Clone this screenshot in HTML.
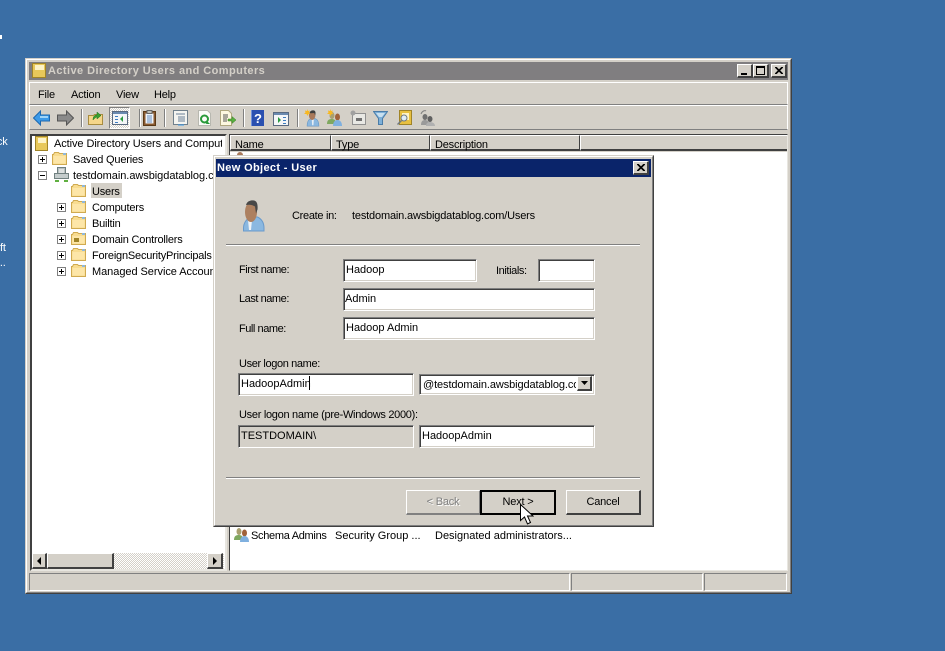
<!DOCTYPE html>
<html><head><meta charset="utf-8"><style>
html,body{margin:0;padding:0;width:945px;height:651px;overflow:hidden;background:#3a6ea5}
body{position:relative;font:11px/13px "Liberation Sans",sans-serif;color:#000;letter-spacing:-.2px}
div,svg{position:absolute}
.t{white-space:nowrap}
.sunk{background:#fff;border:1px solid;border-color:#808080 #fff #fff #808080;box-shadow:inset 1px 1px 0 #404040,inset -1px -1px 0 #d4d0c8;box-sizing:border-box}
.sunk .t{letter-spacing:0}
.face{background:#d4d0c8}
.ln{height:1px;background:#fff;border-top:1px solid #808080}
.btn{background:#d4d0c8;box-sizing:border-box;border-top:1px solid #fff;border-left:1px solid #fff;border-right:2px solid #404040;border-bottom:2px solid #404040;text-align:center}
.hd{background:#d4d0c8;box-sizing:border-box;border-top:1px solid #fff;border-left:1px solid #fff;border-right:1px solid #404040;border-bottom:2px solid #404040;height:16px;top:135px;padding:3px 0 0 4px}
.ex{width:9px;height:9px;box-sizing:border-box;border:1px solid #808080;background:#fff}
.ex:before{content:"";position:absolute;left:1px;top:3px;width:5px;height:1px;background:#000}
.ex.p:after{content:"";position:absolute;left:3px;top:1px;width:1px;height:5px;background:#000}
.sep{width:1px;background:#808080;border-right:1px solid #fff;top:109px;height:18px}
</style></head><body>
<svg width="0" height="0"><defs>
<symbol id="folder" viewBox="0 0 15 13"><path d="M.5 2.500h1l1-2h4l1 1h7v11H.500z" fill="#f8dc90" stroke="#d0aa50"/><path d="M1.500 4h12v7.500h-12z" fill="#fde6a8"/><path d="M11 1h3v2h-3z" fill="#8fb8dc"/></symbol>
<symbol id="user" viewBox="0 0 15 20"><path d="M.5 19c0-6 2-8 4.500-9h5c2.500 1 4.500 3 4.500 9z" fill="#8bb8e0" stroke="#5f8fbd" stroke-width=".6"/><path d="M6 11h2.500L8 18H6.500z" fill="#e8eef4"/><ellipse cx="6.500" cy="6.500" rx="3.800" ry="5.200" fill="#a9795a"/><path d="M3.500 4c0-3 3-4 5-3.500s2.500 3 1.500 6L9 3.500z" fill="#3e3e3e"/></symbol>
<symbol id="grp" viewBox="0 0 16 16"><ellipse cx="5" cy="4.500" rx="2.500" ry="3.500" fill="#a9a070"/><path d="M0 13c0-4 2-5 5-5s4 2 4 5z" fill="#7fa860"/><ellipse cx="10.500" cy="6" rx="2.500" ry="3.500" fill="#a0623a"/><path d="M6 15c0-4 2-6 4.500-6s4.500 2 4.500 6z" fill="#7fb0df"/></symbol>
</defs></svg>

<!-- desktop remnants -->
<div class="t" style="left:-9px;top:136px;color:#fff">ack</div>
<div class="t" style="left:-13px;top:242px;color:#fff">Soft</div>
<div class="t" style="left:-3px;top:257px;color:#fff">...</div>
<div style="left:0;top:35px;width:2px;height:4px;background:#fff"></div>

<!-- main window -->
<div style="left:25px;top:58px;width:767px;height:536px;box-sizing:border-box;background:#d4d0c8;border:1px solid #d4d0c8;border-right-color:#404040;border-bottom-color:#404040"></div>
<div style="left:26px;top:59px;width:765px;height:534px;box-sizing:border-box;border:1px solid #fff;border-right-color:#808080;border-bottom-color:#808080"></div>
<div style="left:29px;top:62px;width:759px;height:18px;background:#807e80"></div>
<svg style="left:32px;top:63px" width="15" height="16"><rect x=".5" y=".5" width="13" height="14" fill="#e8c85a" stroke="#a08428"/><rect x="3" y="2" width="9" height="5" fill="#fdf3c8"/></svg>
<div class="t" style="left:48px;top:65px;color:#d4d0c8;font-weight:bold;letter-spacing:.43px">Active Directory Users and Computers</div>
<div class="btn" style="left:737px;top:64px;width:16px;height:14px"><div style="left:3px;top:8px;width:6px;height:2px;background:#000"></div></div>
<div class="btn" style="left:753px;top:64px;width:16px;height:14px"><div style="left:2px;top:1px;width:9px;height:9px;box-sizing:border-box;border:1px solid #000;border-top-width:2px"></div></div>
<div class="btn" style="left:771px;top:64px;width:16px;height:14px"><svg style="left:3px;top:2px" width="8" height="7"><path d="M0 0l7 7M1 0l7 7M7 0L0 7M8 0L1 7" stroke="#000"/></svg></div>

<!-- menu -->
<div style="left:29px;top:82px;width:759px;height:23px;box-sizing:border-box;border-top:1px solid #fff;border-left:1px solid #fff;border-right:1px solid #fff;border-bottom:1px solid #808080"></div>
<div style="left:29px;top:105px;width:759px;height:25px;box-sizing:border-box;border-top:1px solid #fff;border-left:1px solid #fff;border-right:1px solid #fff;border-bottom:1px solid #808080"></div>
<div class="t" style="left:38px;top:89px">File</div>
<div class="t" style="left:71px;top:89px">Action</div>
<div class="t" style="left:116px;top:89px">View</div>
<div class="t" style="left:154px;top:89px">Help</div>

<!-- toolbar -->
<svg style="left:33px;top:110px" width="18" height="16"><path d="M.5 8l7-7v4h9v6h-9v4z" fill="#3c9ae8" stroke="#1c68b0"/><path d="M7 6h8v2H7z" fill="#9fd4f8"/></svg>
<svg style="left:56px;top:110px" width="18" height="16"><path d="M17.500 8l-7-7v4h-9v6h9v4z" fill="#8a8a8a" stroke="#555"/></svg>
<div class="sep" style="left:81px"></div>
<svg style="left:88px;top:110px" width="16" height="16"><path d="M.5 5.500h5l1-1h8v10H.500z" fill="#f5d68a" stroke="#a88c40"/><path d="M5 10c0-4 2-5 4-5V2l4 3.500-4 3.500V7C8 7 7 8 5 10z" fill="#3aa030" stroke="#1e7018" stroke-width=".5"/></svg>
<div style="left:109px;top:107px;width:21px;height:22px;box-sizing:border-box;border:1px solid #808080;border-right-color:#fff;border-bottom-color:#fff;background:repeating-conic-gradient(#fff 0 25%,#d4d0c8 0 50%) 0 0/2px 2px"></div>
<svg style="left:112px;top:111px" width="16" height="14"><rect x=".5" y=".5" width="15" height="13" fill="#f4f6f8" stroke="#5a6a80"/><rect x="1" y="1" width="14" height="2" fill="#6a8ab0"/><path d="M3 5h3v1H3zM3 8h3v1H3zM3 11h3v1H3z" fill="#3c7cc0"/><path d="M11 5v6L8 8z" fill="#2a9a40"/></svg>
<div class="sep" style="left:139px"></div>
<svg style="left:143px;top:110px" width="14" height="16"><rect x=".5" y="1.500" width="12" height="14" fill="#8a5a30" stroke="#5a3a18"/><rect x="2.500" y="3.500" width="8" height="10" fill="#eef4fa"/><path d="M4 6h5M4 8h5M4 10h5M4 12h5" stroke="#6a90c0"/><rect x="4" y=".5" width="5" height="3" fill="#c0c0b8" stroke="#666"/></svg>
<div class="sep" style="left:164px"></div>
<svg style="left:173px;top:110px" width="15" height="16"><rect x=".5" y=".5" width="14" height="14" fill="#f4f4f0" stroke="#70808c"/><path d="M3 4h9M5 7h7M5 9h7M5 11h7" stroke="#6a8098"/><path d="M5 15h6" stroke="#3c9ae8"/></svg>
<svg style="left:198px;top:110px" width="14" height="16"><path d="M.5.500h9l3 3v12H.500z" fill="#fbfbf8" stroke="#b8b8b0"/><circle cx="6.500" cy="9" r="3.500" fill="none" stroke="#2a9a3a" stroke-width="2"/><path d="M9 11l3 3H8z" fill="#2a9a3a"/></svg>
<svg style="left:220px;top:110px" width="16" height="16"><path d="M.5.500h8l3 3v12H.500z" fill="#fdf8e0" stroke="#b0a880"/><path d="M3 5h5M3 7h5M3 9h4M3 11h4" stroke="#555"/><path d="M8 9h4V6.500L16 10l-4 3.500V11H8z" fill="#58b040" stroke="#388020" stroke-width=".5"/></svg>
<div class="sep" style="left:243px"></div>
<svg style="left:251px;top:110px" width="14" height="16"><rect width="13" height="16" fill="#2a50b0"/><rect x="0" y="0" width="1" height="16" fill="#7090d8"/><text x="3" y="13" font-family="Liberation Sans" font-size="13" font-weight="bold" fill="#fff">?</text></svg>
<svg style="left:273px;top:112px" width="16" height="14"><rect x=".5" y=".5" width="15" height="13" fill="#f4f6f8" stroke="#5a6a80"/><rect x="1" y="1" width="14" height="2" fill="#6a8ab0"/><path d="M10 5h3v1h-3zM10 8h3v1h-3zM10 11h3v1h-3z" fill="#3c7cc0"/><path d="M5 5v6l3-3z" fill="#2a9a40"/></svg>
<div class="sep" style="left:297px"></div>
<svg style="left:304px;top:109px" width="16" height="18"><use href="#user" x="2" y="1" width="14" height="17"/><path d="M3 0l1 2 2-.5-1 2 1.500 1.500-2 0-1 2-1-2-2.500 0 1.500-1.500-.5-2 2 .5z" fill="#f8b820"/></svg>
<svg style="left:327px;top:109px" width="16" height="18"><use href="#grp" x="0" y="2" width="16" height="16"/><path d="M3 0l1 2 2-.5-1 2 1.500 1.500-2 0-1 2-1-2-2.500 0 1.500-1.500-.5-2 2 .5z" fill="#f8b820"/></svg>
<svg style="left:350px;top:110px" width="16" height="16"><rect x="2.500" y="3.500" width="13" height="11" fill="#e8e8e4" stroke="#909090"/><rect x="6" y="8" width="6" height="3" fill="#707070"/><circle cx="3" cy="3" r="2.500" fill="#a0a0a0"/></svg>
<svg style="left:373px;top:111px" width="15" height="15"><path d="M.5.500h14l-5 7v6h-4v-6z" fill="#7eb0d8" stroke="#4a7ca8"/><path d="M3 2h9l-3 4H6z" fill="#c8e0f0"/></svg>
<svg style="left:397px;top:110px" width="15" height="16"><rect x="2.500" y=".5" width="12" height="14" fill="#e8c040" stroke="#a08428"/><rect x="5" y="3" width="7" height="7" fill="#fdf3c8"/><circle cx="7" cy="8" r="3" fill="#e0eef8" stroke="#707880"/><path d="M4.500 10.500l-4 4" stroke="#707880" stroke-width="1.500"/></svg>
<svg style="left:419px;top:109px" width="17" height="18"><ellipse cx="6" cy="8" rx="2.500" ry="3" fill="#707070"/><path d="M2 16c0-4 2-5 4-5s4 1 4 5z" fill="#9a9a9a"/><ellipse cx="11" cy="10" rx="2.500" ry="3" fill="#606060"/><path d="M7 17c0-3 2-4 4-4s5 1 5 4z" fill="#b0b0b0"/><path d="M2 5c1-3 4-4 5-3" stroke="#808080" fill="none"/></svg>

<!-- tree pane -->
<div style="left:30px;top:134px;width:197px;height:437px;box-sizing:border-box;background:#fff;border:2px solid #404040;border-right-color:#e8e6e0;border-bottom-color:#e8e6e0;border-top-width:2px"></div>
<svg style="left:35px;top:136px" width="14" height="15"><rect x=".5" y=".5" width="12" height="14" fill="#e8c85a" stroke="#a08428"/><rect x="3" y="2" width="8" height="5" fill="#fdf3c8"/></svg>
<div class="t" style="left:54px;top:138px;width:168px;overflow:hidden;height:13px;letter-spacing:-.08px">Active Directory Users and Computers</div>
<div class="ex p" style="left:38px;top:155px"></div>
<svg style="left:52px;top:152px" width="15" height="13"><use href="#folder"/></svg>
<div class="t" style="left:73px;top:154px">Saved Queries</div>
<div class="ex" style="left:38px;top:171px"></div>
<svg style="left:54px;top:167px" width="15" height="16"><rect x="3.500" y=".5" width="8" height="6" fill="#b8c0c0" stroke="#708080"/><rect x=".5" y="6.500" width="14" height="5" fill="#c4cccc" stroke="#708080"/><path d="M1 13h4v2H1zM10 13h4v2h-4z" fill="#60b040"/><path d="M5 3h5M5 5h5" stroke="#fff"/></svg>
<div class="t" style="left:73px;top:170px;width:143px;overflow:hidden;height:13px;letter-spacing:-.05px">testdomain.awsbigdatablog.com</div>
<svg style="left:71px;top:184px" width="15" height="13"><use href="#folder"/></svg>
<div style="left:91px;top:183px;width:31px;height:15px;background:#d4d0c8"></div>
<div class="t" style="left:92px;top:186px">Users</div>
<div class="ex p" style="left:57px;top:203px"></div>
<svg style="left:71px;top:200px" width="15" height="13"><use href="#folder"/></svg>
<div class="t" style="left:92px;top:202px">Computers</div>
<div class="ex p" style="left:57px;top:219px"></div>
<svg style="left:71px;top:216px" width="15" height="13"><use href="#folder"/></svg>
<div class="t" style="left:92px;top:218px">Builtin</div>
<div class="ex p" style="left:57px;top:235px"></div>
<svg style="left:71px;top:232px" width="15" height="13"><use href="#folder"/><rect x="3" y="6" width="5" height="4" fill="#a08428"/></svg>
<div class="t" style="left:92px;top:234px">Domain Controllers</div>
<div class="ex p" style="left:57px;top:251px"></div>
<svg style="left:71px;top:248px" width="15" height="13"><use href="#folder"/></svg>
<div class="t" style="left:92px;top:250px">ForeignSecurityPrincipals</div>
<div class="ex p" style="left:57px;top:267px"></div>
<svg style="left:71px;top:264px" width="15" height="13"><use href="#folder"/></svg>
<div class="t" style="left:92px;top:266px;width:122px;overflow:hidden;height:13px;letter-spacing:-.05px">Managed Service Accounts</div>

<!-- scrollbar -->
<div style="left:32px;top:553px;width:192px;height:16px;background:repeating-conic-gradient(#fff 0 25%,#d4d0c8 0 50%) 0 0/2px 2px"></div>
<div class="btn" style="left:32px;top:553px;width:15px;height:16px"><svg style="left:4px;top:3px" width="5" height="9"><path d="M4 0v8L0 4z"/></svg></div>
<div class="btn" style="left:47px;top:553px;width:67px;height:16px"></div>
<div class="btn" style="left:207px;top:553px;width:16px;height:16px"><svg style="left:5px;top:3px" width="5" height="9"><path d="M0 0v8l4-4z"/></svg></div>

<!-- list pane -->
<div style="left:229px;top:134px;width:559px;height:437px;box-sizing:border-box;background:#fff;border:1px solid #404040;border-right-color:#e8e6e0;border-bottom-color:#e8e6e0"></div>
<div style="left:230px;top:135px;width:557px;height:17px;background:#d4d0c8"></div>
<div class="hd" style="left:230px;width:101px">Name</div>
<div class="hd" style="left:331px;width:99px">Type</div>
<div class="hd" style="left:430px;width:150px">Description</div>
<div class="hd" style="left:580px;width:207px;border-right:0"></div>
<svg style="left:234px;top:527px" width="16" height="16"><use href="#grp"/></svg>
<div class="t" style="left:251px;top:530px;letter-spacing:-.3px">Schema Admins</div>
<div class="t" style="left:335px;top:530px;letter-spacing:0">Security Group ...</div>
<div class="t" style="left:435px;top:530px;letter-spacing:0">Designated administrators...</div>
<svg style="left:236px;top:152px" width="9" height="4"><ellipse cx="4" cy="3" rx="3" ry="3" fill="#a9795a"/></svg>

<!-- status bar -->
<div style="left:29px;top:573px;width:541px;height:18px;box-sizing:border-box;border:1px solid #808080;border-right-color:#fff;border-bottom-color:#fff"></div>
<div style="left:571px;top:573px;width:132px;height:18px;box-sizing:border-box;border:1px solid #808080;border-right-color:#fff;border-bottom-color:#fff"></div>
<div style="left:704px;top:573px;width:83px;height:18px;box-sizing:border-box;border:1px solid #808080;border-right-color:#fff;border-bottom-color:#fff"></div>

<!-- dialog -->
<div style="left:213px;top:155px;width:441px;height:372px;box-sizing:border-box;background:#d4d0c8;border:1px solid #d4d0c8;border-right-color:#404040;border-bottom-color:#404040"></div>
<div style="left:214px;top:156px;width:439px;height:370px;box-sizing:border-box;border:1px solid #fff;border-right-color:#808080;border-bottom-color:#808080"></div>
<div style="left:216px;top:159px;width:435px;height:18px;background:#0a246a"></div>
<div class="t" style="left:217px;top:162px;color:#fff;font-weight:bold;letter-spacing:.35px">New Object - User</div>
<div class="btn" style="left:633px;top:161px;width:16px;height:14px"><svg style="left:3px;top:2px" width="8" height="7"><path d="M0 0l7 7M1 0l7 7M7 0L0 7M8 0L1 7" stroke="#000"/></svg></div>

<svg style="left:243px;top:200px" width="22" height="32"><path d="M.5 28c0-5 3-9 7-11h7c4 2 6.500 6 6.500 11v3H.5z" fill="#8bb8e0" stroke="#6a9acb"/><path d="M5 20h4l-1 10H6z" fill="#eef2f6"/><ellipse cx="8" cy="12" rx="6" ry="10" fill="#ad8060"/><path d="M3 5c1-4 5-5 8-4.500s4 4 3.500 9l-1.500 4-1-7c-3-2-6-2-9-1.500z" fill="#484848"/></svg>
<div class="t" style="left:292px;top:210px;letter-spacing:-.3px">Create in:</div>
<div class="t" style="left:352px;top:210px;letter-spacing:-.17px">testdomain.awsbigdatablog.com/Users</div>
<div class="ln" style="left:226px;top:244px;width:414px"></div>

<div class="t" style="left:239px;top:264px;letter-spacing:-.45px">First name:</div>
<div class="sunk" style="left:343px;top:259px;width:134px;height:23px"><div class="t" style="left:2px;top:4px">Hadoop</div></div>
<div class="t" style="left:496px;top:265px;letter-spacing:-.4px">Initials:</div>
<div class="sunk" style="left:538px;top:259px;width:57px;height:23px"></div>
<div class="t" style="left:239px;top:293px;letter-spacing:-.45px">Last name:</div>
<div class="sunk" style="left:343px;top:288px;width:252px;height:23px"><div class="t" style="left:1px;top:4px">Admin</div></div>
<div class="t" style="left:239px;top:323px;letter-spacing:-.45px">Full name:</div>
<div class="sunk" style="left:343px;top:317px;width:252px;height:23px"><div class="t" style="left:2px;top:4px">Hadoop Admin</div></div>

<div class="t" style="left:239px;top:358px;letter-spacing:-.37px">User logon name:</div>
<div class="sunk" style="left:238px;top:373px;width:176px;height:23px"><div class="t" style="left:2px;top:4px">HadoopAdmin</div><div style="left:70px;top:2px;width:1px;height:14px;background:#000"></div></div>
<div class="sunk" style="left:419px;top:374px;width:176px;height:21px"><div class="t" style="left:3px;top:4px;width:153px;overflow:hidden;height:13px;letter-spacing:-.1px">@testdomain.awsbigdatablog.com</div>
<div class="btn" style="left:157px;top:1px;width:15px;height:15px"><svg style="left:3px;top:4px" width="8" height="5"><path d="M0 0h7L3.500 4z"/></svg></div></div>
<div class="t" style="left:239px;top:409px;letter-spacing:-.29px">User logon name (pre-Windows 2000):</div>
<div class="sunk" style="left:238px;top:425px;width:176px;height:23px;background:#d4d0c8"><div class="t" style="left:2px;top:4px">TESTDOMAIN\</div></div>
<div class="sunk" style="left:419px;top:425px;width:176px;height:23px"><div class="t" style="left:2px;top:4px">HadoopAdmin</div></div>
<div class="ln" style="left:226px;top:477px;width:414px"></div>

<div class="btn" style="left:406px;top:490px;width:75px;height:25px;line-height:23px;color:#808080;text-shadow:1px 1px 0 #fff;border-right-color:#808080;border-bottom-color:#808080">&lt; Back</div>
<div style="left:480px;top:490px;width:76px;height:25px;box-sizing:border-box;border:2px solid #000;background:#d4d0c8;text-align:center;line-height:21px">Next &gt;</div>
<div class="btn" style="left:566px;top:490px;width:75px;height:25px;line-height:23px">Cancel</div>
<svg style="left:520px;top:504px" width="14" height="22"><path d="M.5.500v16l4-3.500 3 7 3-1.500-3-6.500h5.500z" fill="#fff" stroke="#000"/></svg>
</body></html>
